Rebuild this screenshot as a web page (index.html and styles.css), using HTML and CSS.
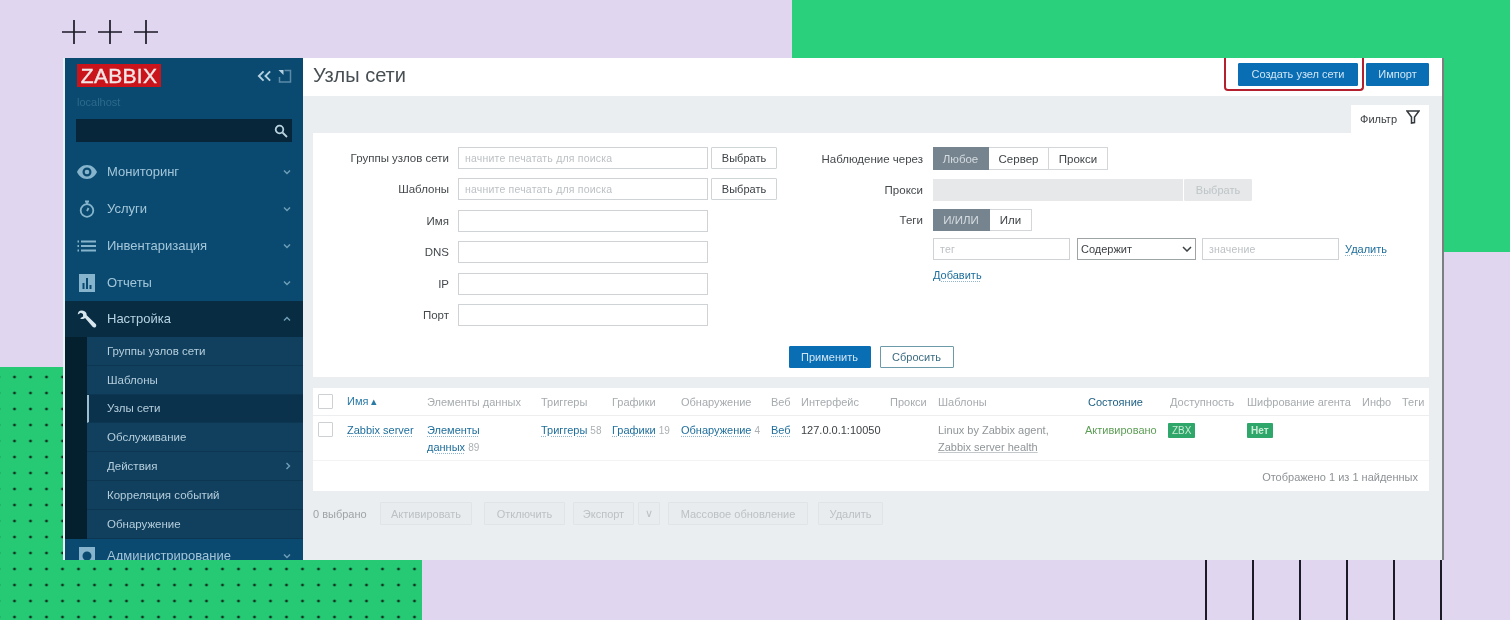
FILE: index.html
```html
<!DOCTYPE html>
<html lang="ru">
<head>
<meta charset="utf-8">
<title>Узлы сети</title>
<link rel="stylesheet" href="styles.css">
</head>
<body>
<div class="stage">
  <div class="deco-green-top"></div>
  <div class="deco-green-dots"></div>
  <div class="deco-pluses">
    <svg viewBox="0 0 24 24"><path d="M12 0V24M0 12H24"/></svg>
    <svg viewBox="0 0 24 24"><path d="M12 0V24M0 12H24"/></svg>
    <svg viewBox="0 0 24 24"><path d="M12 0V24M0 12H24"/></svg>
  </div>
  <div class="deco-ticks"><i></i><i></i><i></i><i></i><i></i><i></i></div>

  <div class="window">
    <aside class="sidebar">
      <div class="brand">
        <span class="logo">ZABBIX</span>
        <span class="brand-tools">
          <svg class="tool" viewBox="0 0 16 14"><path d="M7 2 2 7l5 5M14 2 9 7l5 5"/></svg>
          <svg class="tool tool-dim" viewBox="0 0 14 14"><path d="M7 1.500H13V13H2V8"/><path class="fill" d="M1 1h5v5z"/></svg>
        </span>
      </div>
      <div class="host">localhost</div>
      <div class="search">
        <svg viewBox="0 0 14 14"><circle cx="5.500" cy="5.500" r="3.800"/><path d="m8.500 8.500 4.500 4.500"/></svg>
      </div>
      <nav class="menu">
        <a class="menu-row">
          <svg class="menu-icon" viewBox="0 0 22 16"><path class="fill" d="M11 1C6 1 2.500 4.500 1 8c1.500 3.500 5 7 10 7s8.500-3.500 10-7c-1.500-3.500-5-7-10-7zm0 11.500a4.500 4.500 0 1 1 0-9 4.500 4.500 0 0 1 0 9z"/><circle class="fill" cx="11" cy="8" r="2.300"/></svg>
          <span>Мониторинг</span><svg class="chev" viewBox="0 0 8 6"><path d="m1 1.500 3 3 3-3"/></svg>
        </a>
        <a class="menu-row">
          <svg class="menu-icon" viewBox="0 0 22 18"><circle cx="11" cy="10.500" r="6.300"/><path d="M9 1.500h4M11 1.500v2.500M11 11l1.500-3"/></svg>
          <span>Услуги</span><svg class="chev" viewBox="0 0 8 6"><path d="m1 1.500 3 3 3-3"/></svg>
        </a>
        <a class="menu-row">
          <svg class="menu-icon" viewBox="0 0 22 16"><path d="M5 3.500H20M5 8H20M5 12.500H20M1.500 3.500h1.500M1.500 8h1.500M1.500 12.500h1.500"/></svg>
          <span>Инвентаризация</span><svg class="chev" viewBox="0 0 8 6"><path d="m1 1.500 3 3 3-3"/></svg>
        </a>
        <a class="menu-row">
          <svg class="menu-icon" viewBox="0 0 22 18"><path class="fill" d="M3 0h16v18H3zM6.500 9v6h2V9zM10 4v11h2V4zM13.500 11v4h2v-4z"/></svg>
          <span>Отчеты</span><svg class="chev" viewBox="0 0 8 6"><path d="m1 1.500 3 3 3-3"/></svg>
        </a>
        <a class="menu-row menu-row-open">
          <svg class="menu-icon menu-icon-bright" viewBox="0 0 22 18"><path class="fill" d="M6 0.500C3.500 0.300 1.700 2 1.800 4.500l3-1.800 2.200 1.300.1 2.500-3 1.700c1.700 1.300 3.700 1.100 5-.2l7.500 8.700c.9 1 2.300 1 3.100.2s.8-2.200-.2-3.100L10.700 5.300C11 3 9 .7 6 .5z"/></svg>
          <span>Настройка</span><svg class="chev" viewBox="0 0 8 6"><path d="m1 4.500 3-3 3 3"/></svg>
        </a>
        <div class="submenu">
          <a class="sub-row">Группы узлов сети</a>
          <a class="sub-row">Шаблоны</a>
          <a class="sub-row sub-row-active">Узлы сети</a>
          <a class="sub-row">Обслуживание</a>
          <a class="sub-row">Действия<svg class="chev" viewBox="0 0 6 8"><path d="m1.500 1 3 3-3 3"/></svg></a>
          <a class="sub-row">Корреляция событий</a>
          <a class="sub-row">Обнаружение</a>
        </div>
        <a class="menu-row menu-row-last">
          <svg class="menu-icon" viewBox="0 0 22 18"><path class="fill" d="M3 0h16v18H3zm8 4.500a4.500 4.500 0 1 0 0 9 4.500 4.500 0 0 0 0-9z"/></svg>
          <span>Администрирование</span><svg class="chev" viewBox="0 0 8 6"><path d="m1 1.500 3 3 3-3"/></svg>
        </a>
      </nav>
    </aside>

    <main class="content">
      <header class="topbar">
        <h1 class="title">Узлы сети</h1>
        <div class="topbar-actions">
          <button class="btn btn-primary btn-create">Создать узел сети</button>
          <button class="btn btn-primary btn-import">Импорт</button>
        </div>
        <div class="highlight"></div>
      </header>

      <div class="tabstrip">
        <div class="filter-tab">
          <span>Фильтр</span>
          <svg viewBox="0 0 14 14"><path d="M1 1h12L8.500 7v5.500L5.500 13V7z"/></svg>
        </div>
      </div>

      <section class="filter">
        <div class="filter-columns">
          <div class="filter-left">
            <label class="field-label">Группы узлов сети</label>
            <div class="input"><span class="ph">начните печатать для поиска</span></div>
            <button class="btn btn-plain">Выбрать</button>
            <label class="field-label">Шаблоны</label>
            <div class="input"><span class="ph">начните печатать для поиска</span></div>
            <button class="btn btn-plain">Выбрать</button>
            <label class="field-label">Имя</label>
            <div class="input"></div><span></span>
            <label class="field-label">DNS</label>
            <div class="input"></div><span></span>
            <label class="field-label">IP</label>
            <div class="input"></div><span></span>
            <label class="field-label">Порт</label>
            <div class="input"></div><span></span>
          </div>
          <div class="filter-right">
            <label class="field-label">Наблюдение через</label>
            <div class="segmented seg-tall">
              <span class="seg seg-on seg-any">Любое</span><span class="seg seg-server">Сервер</span><span class="seg seg-proxy">Прокси</span>
            </div>
            <label class="field-label">Прокси</label>
            <div class="proxy-row">
              <div class="input input-off"></div>
              <button class="btn btn-off">Выбрать</button>
            </div>
            <label class="field-label">Теги</label>
            <div class="segmented">
              <span class="seg seg-on seg-andor">И/ИЛИ</span><span class="seg seg-or">Или</span>
            </div>
            <span></span>
            <div class="tag-row">
              <div class="input input-tag"><span class="ph">тег</span></div>
              <div class="input input-select"><span>Содержит</span><svg viewBox="0 0 10 6"><path d="m1 1 4 4 4-4"/></svg></div>
              <div class="input input-tag"><span class="ph">значение</span></div>
              <a class="link">Удалить</a>
            </div>
            <span></span>
            <a class="link link-add">Добавить</a>
          </div>
        </div>
        <div class="filter-actions">
          <button class="btn btn-primary btn-apply">Применить</button>
          <button class="btn btn-reset">Сбросить</button>
        </div>
      </section>

      <section class="hosts">
        <div class="grid-row head-row">
          <span class="check"></span>
          <span class="link-plain">Имя ▴</span>
          <span>Элементы данных</span>
          <span>Триггеры</span>
          <span>Графики</span>
          <span>Обнаружение</span>
          <span>Веб</span>
          <span>Интерфейс</span>
          <span>Прокси</span>
          <span>Шаблоны</span>
          <span class="head-state">Состояние</span>
          <span class="head-avail">Доступность</span>
          <span>Шифрование агента</span>
          <span>Инфо</span>
          <span>Теги</span>
        </div>
        <div class="grid-row data-row">
          <span class="check"></span>
          <span class="link">Zabbix server</span>
          <span class="stacked"><span class="link">Элементы</span><span><span class="link">данных</span> <em>89</em></span></span>
          <span><span class="link">Триггеры</span> <em>58</em></span>
          <span><span class="link">Графики</span> <em>19</em></span>
          <span><span class="link">Обнаружение</span> <em>4</em></span>
          <span class="link">Веб</span>
          <span class="iface">127.0.0.1:10050</span>
          <span></span>
          <span class="stacked templates"><span>Linux by Zabbix agent,</span><u>Zabbix server health</u></span>
          <span class="state">Активировано</span>
          <span><b class="tag tag-zbx">ZBX</b></span>
          <span><b class="tag tag-none">Нет</b></span>
          <span></span>
          <span></span>
        </div>
        <div class="table-foot">Отображено 1 из 1 найденных</div>
      </section>

      <div class="bulk">
        <span class="bulk-count">0 выбрано</span>
        <button class="btn btn-bulk bulk-a">Активировать</button>
        <button class="btn btn-bulk bulk-b">Отключить</button>
        <button class="btn btn-bulk bulk-c">Экспорт</button>
        <button class="btn btn-bulk bulk-d">∨</button>
        <button class="btn btn-bulk bulk-e">Массовое обновление</button>
        <button class="btn btn-bulk bulk-f">Удалить</button>
      </div>
    </main>
  </div>
</div>
</body>
</html>
```
FILE: styles.css
```css
* { box-sizing: border-box; }
html, body { margin: 0; padding: 0; }
body { font-family: "Liberation Sans", Arial, sans-serif; }

.stage {
  position: relative;
  width: 1510px;
  height: 620px;
  overflow: hidden;
  background: #e0d6ef;
}

/* decorative backdrop */
.deco-green-top {
  position: absolute;
  left: 792px;
  top: 0;
  width: 718px;
  height: 252px;
  background: #2ad07c;
}
.deco-green-dots {
  position: absolute;
  left: 0;
  top: 367px;
  width: 422px;
  height: 253px;
  background-color: #26ca75;
  background-image: radial-gradient(circle, #10301f 1px, rgba(16, 48, 31, 0) 1.8px);
  background-size: 16px 16px;
  background-position: 6.500px 2px;
}
.deco-pluses {
  position: absolute;
  left: 62px;
  top: 20px;
  display: flex;
  gap: 12px;
}
.deco-pluses svg {
  width: 24px;
  height: 24px;
  fill: none;
  stroke: #1b1a26;
  stroke-width: 1.700;
}
.deco-ticks {
  position: absolute;
  left: 1205px;
  top: 560px;
  height: 60px;
  display: flex;
  gap: 45px;
}
.deco-ticks i {
  display: block;
  width: 2px;
  background: #1d1a28;
}

/* application window */
.window {
  position: absolute;
  left: 63px;
  top: 58px;
  width: 1381px;
  height: 502px;
  display: flex;
  overflow: hidden;
  background: #ebeef0;
  border-left: 2px solid #e6f3f7;
  border-right: 2px solid #7c7f80;
  filter: blur(0.7px);
}

/* sidebar */
.sidebar {
  width: 238px;
  flex: none;
  background: #0b4a70;
  color: #a9c9da;
}
.brand {
  display: flex;
  align-items: center;
  justify-content: space-between;
  padding: 6px 11px 0 12px;
}
.logo {
  width: 84px;
  height: 23px;
  background: #c9141b;
  color: #f3e6e6;
  font-size: 21px;
  line-height: 23px;
  text-align: center;
  letter-spacing: 0.3px;
  -webkit-text-stroke: 0.4px #f3e6e6;
}
.brand-tools { display: flex; align-items: center; gap: 5px; }
.tool {
  width: 15px;
  height: 14px;
  fill: none;
  stroke: #b5d2e2;
  stroke-width: 2;
}
.tool-dim { stroke: #5c8ba8; stroke-width: 1.500; }
.tool-dim .fill { fill: #b5d2e2; stroke: none; }
.host {
  height: 14px;
  margin: 8px 0 0 12px;
  font-size: 11px;
  line-height: 14px;
  color: #2c6a8c;
}
.search {
  display: flex;
  align-items: center;
  justify-content: flex-end;
  height: 23px;
  margin: 10px 11px 0 11px;
  padding-right: 4px;
  background: #08263a;
}
.search svg {
  width: 14px;
  height: 14px;
  fill: none;
  stroke: #b8d2df;
  stroke-width: 1.800;
}
.menu { margin-top: 11px; }
.menu-row {
  display: flex;
  align-items: center;
  height: 37px;
  padding: 0 12px 0 11px;
  font-size: 13px;
  color: #a3c6d9;
}
.menu-row span { flex: 1; margin-left: 9px; }
.menu-row-last { height: 34px; }
.menu-icon {
  width: 22px;
  height: 18px;
  flex: none;
  fill: none;
  stroke: #85b4cc;
  stroke-width: 1.800;
}
.menu-icon .fill { fill: #85b4cc; stroke: none; fill-rule: evenodd; }
.menu-icon-bright .fill { fill: #d8e6ee; }
.chev {
  width: 8px;
  height: 6px;
  flex: none;
  fill: none;
  stroke: #6f9fb8;
  stroke-width: 1.400;
}
.menu-row-open {
  height: 36px;
  background: #082c42;
  color: #b7d3e2;
}
.menu-row-open span { padding-bottom: 1px; }
.submenu {
  background: #04202f;
  padding-left: 22px;
}
.sub-row {
  display: flex;
  align-items: center;
  justify-content: space-between;
  height: 28.800px;
  padding: 0 12px 0 20px;
  font-size: 11.500px;
  color: #b5cedc;
  background: #11405f;
  border-bottom: 1px solid #0d3652;
}
.sub-row .chev { width: 6px; height: 8px; }
.sub-row-active {
  background: #0b324c;
  padding-left: 18px;
  border-left: 2px solid #9dbdd0;
}

/* main column */
.content {
  flex: 1;
  min-width: 0;
}
.topbar {
  position: relative;
  display: flex;
  align-items: center;
  justify-content: space-between;
  height: 38px;
  padding: 0 13px 0 10px;
  background: #fff;
}
.title {
  margin: -3px 0 0;
  font-size: 20px;
  font-weight: 400;
  color: #474f53;
}
.topbar-actions { display: flex; gap: 8px; margin-top: -6px; }
.highlight {
  position: absolute;
  left: 921px;
  top: 0;
  width: 140px;
  height: 33px;
  border: 2px solid #b4202e;
  border-top: 0;
  border-radius: 0 0 4px 4px;
}
.btn {
  height: 22px;
  padding: 0;
  font: 400 11px "Liberation Sans", Arial, sans-serif;
  border: 1px solid #cfd4d7;
  border-radius: 1px;
  background: #fff;
  color: #3b4144;
}
.btn-primary {
  background: #0a6eb4;
  border-color: #0a6eb4;
  color: #cfe6f5;
}
.btn-create { width: 120px; height: 23px; }
.btn-import { width: 63px; height: 23px; }
.btn-plain { width: 66px; font-size: 11px; }
.btn-off {
  width: 68px;
  background: #e6e8e9;
  border-color: #e6e8e9;
  color: #bfc4c7;
}
.btn-apply { width: 82px; }
.btn-reset {
  width: 74px;
  border: 1px solid #6d9aa8;
  color: #3c6c80;
}

.tabstrip {
  display: flex;
  justify-content: flex-end;
  height: 37px;
  padding: 9px 13px 0 0;
}
.filter-tab {
  display: flex;
  align-items: center;
  justify-content: flex-end;
  gap: 9px;
  width: 78px;
  height: 28px;
  padding: 0 9px 3px 0;
  background: #fff;
  font-size: 11px;
  color: #3c4144;
}
.filter-tab span { margin-top: 3px; }
.filter-tab svg {
  width: 14px;
  height: 14px;
  margin-top: -2px;
  fill: none;
  stroke: #33393c;
  stroke-width: 1.500;
}

.filter {
  height: 244px;
  margin: 0 13px 0 10px;
  padding-top: 14px;
  background: #fff;
}
.filter-columns {
  display: flex;
  height: 199px;
  align-items: flex-start;
}
.filter-left {
  display: grid;
  grid-template-columns: 136px 250px 66px;
  column-gap: 9px;
  grid-auto-rows: 22px;
  row-gap: 9.400px;
}
.filter-left .btn { margin-left: -6px; }
.field-label {
  align-self: center;
  text-align: right;
  font-size: 11.500px;
  color: #44494c;
}
.input {
  height: 22px;
  border: 1px solid #cfd3d5;
  background: #fff;
  font-size: 11px;
  line-height: 20px;
  padding: 0 6px;
  color: #3c4144;
}
.ph {
  display: block;
  font-size: 10.500px;
  letter-spacing: 0.2px;
  white-space: nowrap;
  color: #bcc1c4;
  filter: blur(0.5px);
}
.filter-right {
  display: grid;
  grid-template-columns: 133px 1fr;
  column-gap: 10px;
  grid-template-rows: 23px 22px 22px 22px 18px;
  row-gap: 8.500px;
  margin-left: 7px;
  width: 600px;
}
.filter-right > :nth-child(7),
.filter-right > :nth-child(8) { margin-top: -3px; }
.filter-right > :nth-child(10) { margin-top: -8px; }
.segmented {
  display: flex;
  height: 22px;
}
.seg-tall { height: 23px; }
.seg {
  display: flex;
  align-items: center;
  justify-content: center;
  font-size: 11.500px;
  color: #3e4447;
  border: 1px solid #d3d7d9;
  border-left-width: 0;
  background: #fff;
}
.seg-on {
  background: #76848f;
  border-color: #76848f;
  color: #d5dce1;
}
.seg-any { width: 56px; }
.seg-server { width: 60px; }
.seg-proxy { width: 59px; }
.seg-andor { width: 57px; }
.seg-or { width: 42px; }
.proxy-row { display: flex; gap: 1px; }
.input-off {
  width: 250px;
  background: #e6e8e9;
  border-color: #e6e8e9;
}
.tag-row {
  display: flex;
  align-items: center;
  gap: 6px;
}
.input-tag { width: 137px; }
.input-select {
  display: flex;
  align-items: center;
  justify-content: space-between;
  width: 119px;
  padding: 0 3px;
  border-color: #9ea3a6;
}
.input-select svg {
  width: 10px;
  height: 6px;
  fill: none;
  stroke: #3c4144;
  stroke-width: 1.500;
}
.tag-row > :first-child { margin-right: 1px; }
.link {
  color: #1e6e9c;
  font-size: 11px;
  text-decoration: underline dotted #8fb6cc;
  text-underline-offset: 2px;
}
.link-add { align-self: center; justify-self: start; }
.filter-actions {
  display: flex;
  justify-content: center;
  gap: 9px;
}

/* hosts table */
.hosts {
  height: 103px;
  margin: 11px 13px 0 10px;
  background: #fff;
}
.grid-row {
  display: grid;
  grid-template-columns: 34px 80px 114px 71px 69px 90px 30px 89px 48px 147px 83px 79px 115px 40px 27px;
  font-size: 11px;
  color: #a6abae;
}
.grid-row > span { white-space: nowrap; }
.head-row {
  height: 28px;
  align-items: center;
  border-bottom: 1px solid #eceeef;
}
.data-row {
  height: 45px;
  padding-top: 6px;
  line-height: 17px;
  border-bottom: 1px solid #f2f3f4;
}
.stacked {
  display: flex;
  flex-direction: column;
  align-items: flex-start;
}
.check {
  display: block;
  width: 15px;
  height: 15px;
  margin-left: 5px;
  border: 1px solid #cdd1d4;
  border-radius: 1px;
  background: #fff;
}
.link-plain { color: #2a7aa6; }
.head-state { color: #1d5f82; margin-left: 3px; }
.head-avail { margin-left: 2px; }
.iface { color: #3d4245; }
.templates { color: #8f9598; }
.templates u { text-decoration-color: #c4c8ca; }
.state { color: #5d9e56; }
em { font-style: normal; color: #aab0b3; font-size: 10px; }
.tag {
  display: inline-block;
  height: 15px;
  padding: 0 4px;
  font-size: 10px;
  line-height: 15px;
  font-weight: 400;
  color: #c9ecd6;
  background: #2fa66a;
  border-radius: 1px;
}
.tag-none { font-weight: 700; padding: 0 4px; }
.table-foot {
  padding: 10px 11px 0 0;
  text-align: right;
  font-size: 11px;
  color: #8d9295;
}

/* bulk actions */
.bulk {
  display: flex;
  align-items: center;
  height: 23px;
  margin: 11px 0 0 10px;
  font-size: 11px;
  color: #9ea3a6;
}
.bulk-count { width: 67px; }
.btn-bulk {
  height: 23px;
  background: #e9ecee;
  border-color: #e1e4e6;
  color: #bcc1c4;
}
.bulk-a { width: 92px; }
.bulk-b { width: 81px; margin-left: 12px; }
.bulk-c { width: 61px; margin-left: 8px; }
.bulk-d { width: 22px; margin-left: 4px; }
.bulk-e { width: 140px; margin-left: 8px; }
.bulk-f { width: 65px; margin-left: 10px; }
```
